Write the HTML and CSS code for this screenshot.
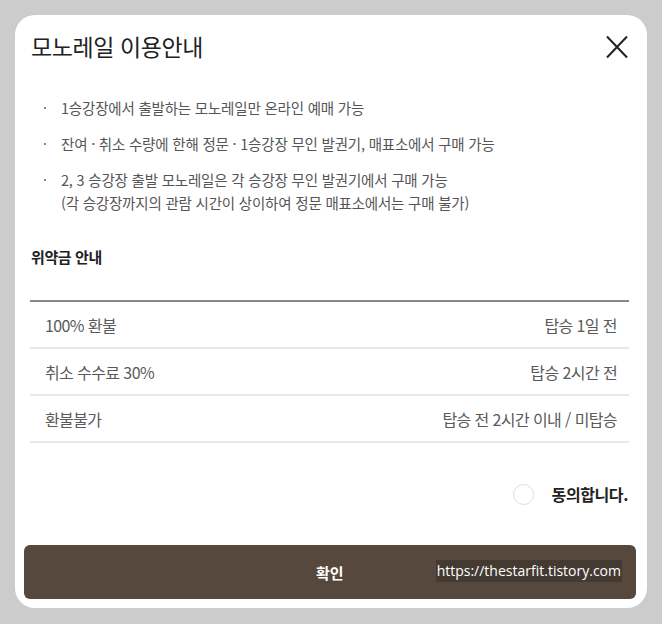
FILE: index.html
```html
<!DOCTYPE html>
<html lang="ko">
<head>
<meta charset="utf-8">
<link rel="stylesheet" href="styles.css">
</head>
<body>
<div class="modal">
  <div class="head">
    <h1 class="title">모노레일 이용안내</h1>
    <button class="close" aria-label="닫기">
      <svg width="24" height="24" viewBox="0 0 24 24"><path d="M2 1.5 L22 22.5 M22 1.5 L2 22.5" stroke="#222" stroke-width="2" fill="none"/></svg>
    </button>
  </div>
  <ul class="notes">
    <li>1승강장에서 출발하는 모노레일만 온라인 예매 가능</li>
    <li>잔여 · 취소 수량에 한해 정문 · 1승강장 무인 발권기, 매표소에서 구매 가능</li>
    <li>2, 3 승강장 출발 모노레일은 각 승강장 무인 발권기에서 구매 가능<br>(각 승강장까지의 관람 시간이 상이하여 정문 매표소에서는 구매 불가)</li>
  </ul>
  <h2 class="sub">위약금 안내</h2>
  <div class="table">
    <div class="row"><span>100% 환불</span><span class="r">탑승 1일 전</span></div>
    <div class="row"><span>취소 수수료 30%</span><span class="r">탑승 2시간 전</span></div>
    <div class="row"><span>환불불가</span><span class="r">탑승 전 2시간 이내 / 미탑승</span></div>
  </div>
  <label class="agree"><span class="circle"></span><span class="agree-text">동의합니다.</span></label>
  <div class="btn">
    <span class="btn-label">확인</span>
    <span class="mark">https://thestarfit.tistory.com</span>
  </div>
</div>
</body>
</html>
```
FILE: styles.css
```css
* { box-sizing: border-box; }
html, body { margin: 0; padding: 0; }
body {
  background: #cccccc;
  width: 662px;
  height: 624px;
  padding: 15px 0 0 15px;
  font-family: "Noto Sans CJK KR", "Noto Sans", sans-serif;
  overflow: hidden;
}
.modal {
  width: 632px;
  height: 593px;
  background: #fff;
  border-radius: 20px;
  padding: 0 11px 0 9px;
  display: flex;
  flex-direction: column;
}
.head {
  display: flex;
  justify-content: space-between;
  align-items: center;
  padding: 0 7px 0 7px;
  height: 62px;
}
.title {
  margin: 0;
  font-size: 23px;
  font-weight: 400;
  color: #222;
  letter-spacing: -0.4px;
  line-height: 32px;
}
.close {
  border: 0;
  background: none;
  padding: 0;
  width: 24px;
  height: 24px;
  margin-top: 2px;
}
.close svg { display: block; }
.notes {
  list-style: none;
  margin: 0;
  padding: 19px 0 0 20px;
  display: flex;
  flex-direction: column;
  gap: 13px;
}
.notes li {
  position: relative;
  padding-left: 17px;
  font-size: 14.5px;
  line-height: 23px;
  color: #555;
  letter-spacing: -0.2px;
}
.notes li::before {
  content: "";
  position: absolute;
  left: 0;
  top: 11px;
  width: 2px;
  height: 2px;
  background: #888;
}
.sub {
  margin: 32px 0 0 7px;
  font-size: 15px;
  font-weight: 700;
  color: #222;
  line-height: 22px;
  letter-spacing: -0.4px;
}
.table {
  margin: 32px 7px 0 6px;
  border-top: 2px solid #888;
}
.row {
  display: flex;
  justify-content: space-between;
  align-items: center;
  height: 47px;
  padding: 0 12px 0 15px;
  border-bottom: 2px solid #e8e8e8;
  font-size: 16px;
  color: #5a5a5a;
  letter-spacing: -0.6px;
}
.agree {
  display: flex;
  align-items: center;
  justify-content: flex-end;
  gap: 18px;
  margin: 39px 8px 0 0;
}
.circle {
  width: 21px;
  height: 21px;
  border: 1px solid #ddd;
  border-radius: 50%;
}
.agree-text {
  font-size: 16px;
  font-weight: 700;
  color: #222;
  letter-spacing: -0.4px;
}
.btn {
  margin-top: 39px;
  height: 54px;
  background: #56483c;
  border-radius: 6px;
  display: flex;
  align-items: center;
  position: relative;
}
.btn-label {
  margin-left: 292px;
  color: #fff;
  font-size: 15px;
  font-weight: 700;
}
.mark {
  position: absolute;
  right: 14px;
  top: 15px;
  background: #453a31;
  color: #fff;
  font-family: "Open Sans", "Noto Sans", sans-serif;
  font-size: 14px;
  line-height: 22px;
  padding: 0 1px;
}
```
